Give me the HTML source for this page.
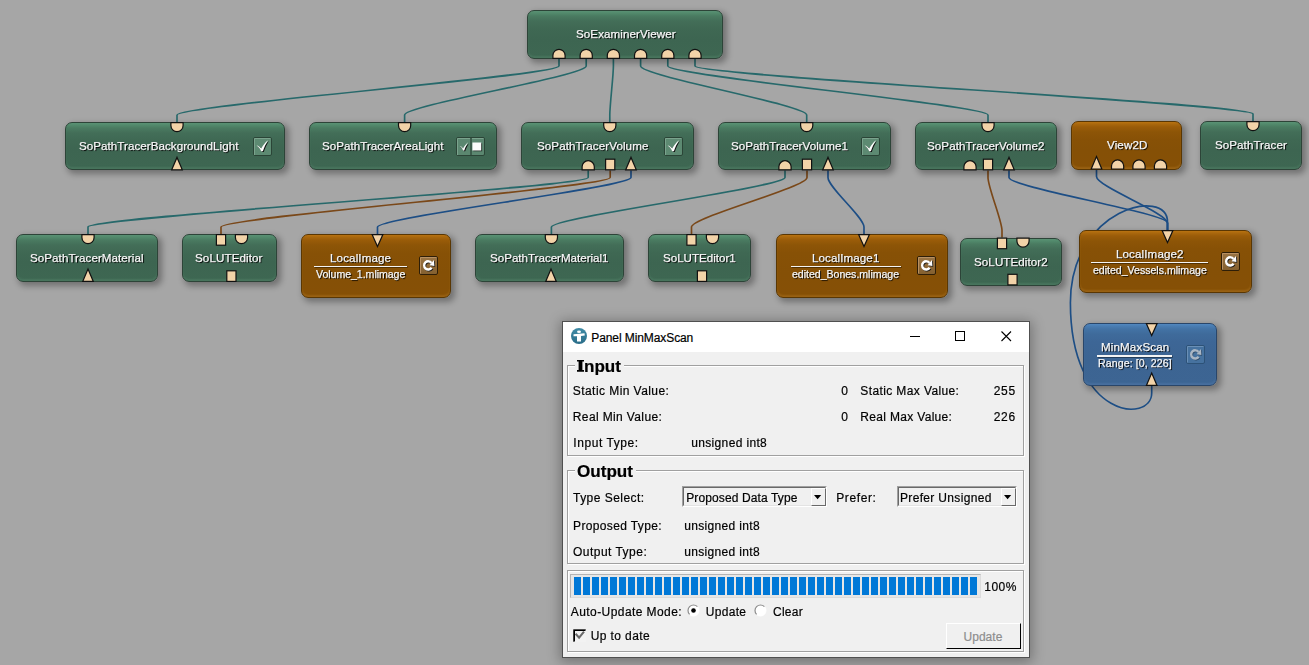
<!DOCTYPE html>
<html><head><meta charset="utf-8"><style>
*{margin:0;padding:0;box-sizing:border-box}
html,body{width:1309px;height:665px;overflow:hidden;background:#a6a6a6;font-family:"Liberation Sans",sans-serif}
.layer{position:absolute;left:0;top:0;width:1309px;height:665px}
.m{position:absolute;border-radius:7px;box-shadow:2px 3px 4px rgba(0,0,0,0.35)}
.tx{position:absolute;white-space:nowrap;line-height:20px;height:20px;-webkit-text-stroke:0.2px currentColor}
.mt{-webkit-text-stroke:0.25px currentColor}
.mt{text-shadow:1px 1px 0.8px #000;will-change:transform}
.dlg{position:absolute;left:562px;top:321px;width:468px;height:337px;background:#f0f0f0;border:1px solid #505050;box-shadow:0 2px 12px 2px rgba(0,0,0,0.3)}
.grp{position:absolute;border:1px solid #a0a0a0;box-shadow:inset 1px 1px 0 #fff,1px 1px 0 #fff}
</style></head><body>
<svg class="layer" width="1309" height="665"><path d="M559,59 L559,66 C559,76 177,105 177,115 L177,122" fill="none" stroke="#27696b" stroke-width="1.65"/><path d="M586.2,59 L586.2,66 C586.2,76 404.6,105 404.6,115 L404.6,122" fill="none" stroke="#27696b" stroke-width="1.65"/><path d="M613.4,59 L613.4,66 C613.4,76 609.8,105 609.8,115 L609.8,122" fill="none" stroke="#27696b" stroke-width="1.65"/><path d="M640.6,59 L640.6,66 C640.6,76 806.7,105 806.7,115 L806.7,122" fill="none" stroke="#27696b" stroke-width="1.65"/><path d="M667.8,59 L667.8,66 C667.8,76 988,105 988,115 L988,122" fill="none" stroke="#27696b" stroke-width="1.65"/><path d="M695,59 L695,66 C695,76 1253,104 1253,114 L1253,121" fill="none" stroke="#27696b" stroke-width="1.65"/><path d="M588.2,170.4 L588.2,177.4 C588.2,187.4 88,217 88,227 L88,234" fill="none" stroke="#27696b" stroke-width="1.65"/><path d="M610.2,170.4 L610.2,177.4 C610.2,187.4 221,217 221,227 L221,234" fill="none" stroke="#7a4819" stroke-width="1.65"/><path d="M631,170.4 L631,177.4 C631,187.4 377.5,217 377.5,227 L377.5,234" fill="none" stroke="#1d4e85" stroke-width="1.65"/><path d="M785,170.4 L785,177.4 C785,187.4 551.4,217 551.4,227 L551.4,234" fill="none" stroke="#27696b" stroke-width="1.65"/><path d="M807,170.4 L807,177.4 C807,187.4 691.5,217 691.5,227 L691.5,234" fill="none" stroke="#7a4819" stroke-width="1.65"/><path d="M828,170.4 L828,177.4 C828,187.4 864,217 864,227 L864,234" fill="none" stroke="#1d4e85" stroke-width="1.65"/><path d="M988,170.4 L988,177.4 C988,187.4 1002,220.5 1002,230.5 L1002,237.5" fill="none" stroke="#7a4819" stroke-width="1.65"/><path d="M1009,170.4 L1009,177.4 C1009,187.4 1167.5,213 1167.5,223 L1167.5,230" fill="none" stroke="#1d4e85" stroke-width="1.65"/><path d="M1096.5,169.5 L1096.5,176.5 C1096.5,186.5 1167.5,213 1167.5,223 L1167.5,230" fill="none" stroke="#1d4e85" stroke-width="1.65"/><path d="M1167.5,230 L1167.5,222 C1167.5,186.8 1070.4,207.8 1070.4,302.8 C1070.4,420.4 1151.7,423.2 1151.7,393 L1151.7,386" fill="none" stroke="#1d4e85" stroke-width="1.65"/></svg><div class="m" style="left:527px;top:10px;width:195.5px;height:49px;background:linear-gradient(to bottom,#5a9174 0px,#528a6c 2px,#4a7b61 5px,#436e58 10px,#3f6853 18px,#3d6551 60%,#3e6752 100%);border:1px solid #2d4438;box-shadow:3px 3px 6px 0.5px rgba(0,0,0,0.32),inset 0 -2px 2px rgba(150,220,180,0.12)"></div><div class="tx mt" style="left:575.60px;top:24.18px;font-size:11.6px;font-weight:400;font-family:'Liberation Sans';letter-spacing:0.080px;color:#f6f6f6;">SoExaminerViewer</div><div class="m" style="left:65px;top:122px;width:220px;height:48.400000000000006px;background:linear-gradient(to bottom,#5a9174 0px,#528a6c 2px,#4a7b61 5px,#436e58 10px,#3f6853 18px,#3d6551 60%,#3e6752 100%);border:1px solid #2d4438;box-shadow:3px 3px 6px 0.5px rgba(0,0,0,0.32),inset 0 -2px 2px rgba(150,220,180,0.12)"></div><div class="tx mt" style="left:79.40px;top:136.18px;font-size:11.6px;font-weight:400;font-family:'Liberation Sans';letter-spacing:0.050px;color:#f6f6f6;">SoPathTracerBackgroundLight</div><svg width="20" height="20" style="position:absolute;left:253.0px;top:136.5px"><rect x="0.5" y="0.5" width="18" height="18" rx="1.5" fill="#5d8a72" stroke="#2b4537" stroke-width="1"/><path d="M1.5,18 L1.5,1.5 L17.5,1.5" fill="none" stroke="#7ba38d" stroke-width="1"/><path d="M3.6,8.4 C5.4,8.6 7,9.8 8.3,11.6 C9.9,8.4 12,5.6 15,3.2 C13.2,6.2 11.2,10 9.9,14.2 L8.2,14.2 C7.2,11.8 5.8,9.8 3.6,8.4 Z" fill="#111" transform="translate(0.9,0.9)"/><path d="M3.6,8.4 C5.4,8.6 7,9.8 8.3,11.6 C9.9,8.4 12,5.6 15,3.2 C13.2,6.2 11.2,10 9.9,14.2 L8.2,14.2 C7.2,11.8 5.8,9.8 3.6,8.4 Z" fill="#fff"/></svg><div class="m" style="left:309px;top:122px;width:188px;height:48.400000000000006px;background:linear-gradient(to bottom,#5a9174 0px,#528a6c 2px,#4a7b61 5px,#436e58 10px,#3f6853 18px,#3d6551 60%,#3e6752 100%);border:1px solid #2d4438;box-shadow:3px 3px 6px 0.5px rgba(0,0,0,0.32),inset 0 -2px 2px rgba(150,220,180,0.12)"></div><div class="tx mt" style="left:321.72px;top:136.18px;font-size:11.6px;font-weight:400;font-family:'Liberation Sans';letter-spacing:0.035px;color:#f6f6f6;">SoPathTracerAreaLight</div><svg width="30" height="20" style="position:absolute;left:455.5px;top:136.5px"><rect x="0.5" y="0.5" width="28" height="18" rx="1.5" fill="#5b8770" stroke="#2b4537"/><path d="M1.5,18 L1.5,1.5 L14,1.5 M16,1.5 L27.5,1.5" fill="none" stroke="#7ba38d"/><line x1="15" y1="1" x2="15" y2="18" stroke="#1f3329" stroke-width="1"/><g transform="translate(1.0,2.9) scale(0.74)"><path d="M3.6,8.4 C5.4,8.6 7,9.8 8.3,11.6 C9.9,8.4 12,5.6 15,3.2 C13.2,6.2 11.2,10 9.9,14.2 L8.2,14.2 C7.2,11.8 5.8,9.8 3.6,8.4 Z" fill="#111" transform="translate(1.2,1.2)"/><path d="M3.6,8.4 C5.4,8.6 7,9.8 8.3,11.6 C9.9,8.4 12,5.6 15,3.2 C13.2,6.2 11.2,10 9.9,14.2 L8.2,14.2 C7.2,11.8 5.8,9.8 3.6,8.4 Z" fill="#fff"/></g><rect x="17.3" y="6.3" width="8.8" height="8" fill="#1a1a1a" opacity="0.8"/><rect x="16.4" y="5.5" width="8.8" height="8" fill="#fdfdfd"/></svg><div class="m" style="left:521px;top:122px;width:173px;height:48.400000000000006px;background:linear-gradient(to bottom,#5a9174 0px,#528a6c 2px,#4a7b61 5px,#436e58 10px,#3f6853 18px,#3d6551 60%,#3e6752 100%);border:1px solid #2d4438;box-shadow:3px 3px 6px 0.5px rgba(0,0,0,0.32),inset 0 -2px 2px rgba(150,220,180,0.12)"></div><div class="tx mt" style="left:536.72px;top:136.18px;font-size:11.6px;font-weight:400;font-family:'Liberation Sans';letter-spacing:0.094px;color:#f6f6f6;">SoPathTracerVolume</div><svg width="20" height="20" style="position:absolute;left:663.5px;top:136.5px"><rect x="0.5" y="0.5" width="18" height="18" rx="1.5" fill="#5d8a72" stroke="#2b4537" stroke-width="1"/><path d="M1.5,18 L1.5,1.5 L17.5,1.5" fill="none" stroke="#7ba38d" stroke-width="1"/><path d="M3.6,8.4 C5.4,8.6 7,9.8 8.3,11.6 C9.9,8.4 12,5.6 15,3.2 C13.2,6.2 11.2,10 9.9,14.2 L8.2,14.2 C7.2,11.8 5.8,9.8 3.6,8.4 Z" fill="#111" transform="translate(0.9,0.9)"/><path d="M3.6,8.4 C5.4,8.6 7,9.8 8.3,11.6 C9.9,8.4 12,5.6 15,3.2 C13.2,6.2 11.2,10 9.9,14.2 L8.2,14.2 C7.2,11.8 5.8,9.8 3.6,8.4 Z" fill="#fff"/></svg><div class="m" style="left:718px;top:122px;width:173px;height:48.400000000000006px;background:linear-gradient(to bottom,#5a9174 0px,#528a6c 2px,#4a7b61 5px,#436e58 10px,#3f6853 18px,#3d6551 60%,#3e6752 100%);border:1px solid #2d4438;box-shadow:3px 3px 6px 0.5px rgba(0,0,0,0.32),inset 0 -2px 2px rgba(150,220,180,0.12)"></div><div class="tx mt" style="left:730.60px;top:136.18px;font-size:11.6px;font-weight:400;font-family:'Liberation Sans';letter-spacing:0.035px;color:#f6f6f6;">SoPathTracerVolume1</div><svg width="20" height="20" style="position:absolute;left:860.5px;top:136.5px"><rect x="0.5" y="0.5" width="18" height="18" rx="1.5" fill="#5d8a72" stroke="#2b4537" stroke-width="1"/><path d="M1.5,18 L1.5,1.5 L17.5,1.5" fill="none" stroke="#7ba38d" stroke-width="1"/><path d="M3.6,8.4 C5.4,8.6 7,9.8 8.3,11.6 C9.9,8.4 12,5.6 15,3.2 C13.2,6.2 11.2,10 9.9,14.2 L8.2,14.2 C7.2,11.8 5.8,9.8 3.6,8.4 Z" fill="#111" transform="translate(0.9,0.9)"/><path d="M3.6,8.4 C5.4,8.6 7,9.8 8.3,11.6 C9.9,8.4 12,5.6 15,3.2 C13.2,6.2 11.2,10 9.9,14.2 L8.2,14.2 C7.2,11.8 5.8,9.8 3.6,8.4 Z" fill="#fff"/></svg><div class="m" style="left:915px;top:122px;width:142px;height:48.400000000000006px;background:linear-gradient(to bottom,#5a9174 0px,#528a6c 2px,#4a7b61 5px,#436e58 10px,#3f6853 18px,#3d6551 60%,#3e6752 100%);border:1px solid #2d4438;box-shadow:3px 3px 6px 0.5px rgba(0,0,0,0.32),inset 0 -2px 2px rgba(150,220,180,0.12)"></div><div class="tx mt" style="left:927.40px;top:136.18px;font-size:11.6px;font-weight:400;font-family:'Liberation Sans';letter-spacing:0.075px;color:#f6f6f6;">SoPathTracerVolume2</div><div class="m" style="left:1071.3px;top:121px;width:110.70000000000005px;height:48.599999999999994px;background:linear-gradient(to bottom,#b97311 0px,#aa680d 2px,#9a5c09 5px,#8d5507 10px,#875106 18px,#855006 60%,#865006 100%);border:1px solid #5a3703;box-shadow:3px 3px 6px 0.5px rgba(0,0,0,0.32),inset 0 -2px 2px rgba(255,190,90,0.16)"></div><div class="tx mt" style="left:1107.00px;top:135.18px;font-size:11.6px;font-weight:400;font-family:'Liberation Sans';letter-spacing:0.118px;color:#f6f6f6;">View2D</div><div class="m" style="left:1200px;top:121px;width:102px;height:48.5px;background:linear-gradient(to bottom,#5a9174 0px,#528a6c 2px,#4a7b61 5px,#436e58 10px,#3f6853 18px,#3d6551 60%,#3e6752 100%);border:1px solid #2d4438;box-shadow:3px 3px 6px 0.5px rgba(0,0,0,0.32),inset 0 -2px 2px rgba(150,220,180,0.12)"></div><div class="tx mt" style="left:1214.76px;top:135.18px;font-size:11.6px;font-weight:400;font-family:'Liberation Sans';letter-spacing:0.062px;color:#f6f6f6;">SoPathTracer</div><div class="m" style="left:16px;top:234px;width:142px;height:48px;background:linear-gradient(to bottom,#5a9174 0px,#528a6c 2px,#4a7b61 5px,#436e58 10px,#3f6853 18px,#3d6551 60%,#3e6752 100%);border:1px solid #2d4438;box-shadow:3px 3px 6px 0.5px rgba(0,0,0,0.32),inset 0 -2px 2px rgba(150,220,180,0.12)"></div><div class="tx mt" style="left:29.72px;top:248.18px;font-size:11.6px;font-weight:400;font-family:'Liberation Sans';letter-spacing:0.061px;color:#f6f6f6;">SoPathTracerMaterial</div><div class="m" style="left:182px;top:234px;width:95px;height:48px;background:linear-gradient(to bottom,#5a9174 0px,#528a6c 2px,#4a7b61 5px,#436e58 10px,#3f6853 18px,#3d6551 60%,#3e6752 100%);border:1px solid #2d4438;box-shadow:3px 3px 6px 0.5px rgba(0,0,0,0.32),inset 0 -2px 2px rgba(150,220,180,0.12)"></div><div class="tx mt" style="left:195.40px;top:248.18px;font-size:11.6px;font-weight:400;font-family:'Liberation Sans';letter-spacing:0.109px;color:#f6f6f6;">SoLUTEditor</div><div class="m" style="left:301px;top:234px;width:150px;height:63.5px;background:linear-gradient(to bottom,#b97311 0px,#aa680d 2px,#9a5c09 5px,#8d5507 10px,#875106 18px,#855006 60%,#865006 100%);border:1px solid #5a3703;box-shadow:3px 3px 6px 0.5px rgba(0,0,0,0.32),inset 0 -2px 2px rgba(255,190,90,0.16)"></div><div class="tx mt" style="left:330.04px;top:247.98px;font-size:11.6px;font-weight:400;font-family:'Liberation Sans';letter-spacing:0.123px;color:#f6f6f6;">LocalImage</div><div style="position:absolute;left:314px;top:266px;width:93px;height:1.4px;background:#f4f4f4;box-shadow:0.7px 0.7px 0.6px rgba(0,0,0,0.5)"></div><div class="tx mt" style="left:316.16px;top:264.13px;font-size:10.6px;font-weight:400;font-family:'Liberation Sans';letter-spacing:-0.051px;color:#f6f6f6;">Volume_1.mlimage</div><svg width="20" height="20" style="position:absolute;left:419.1px;top:256.1px"><defs><linearGradient id="rg419" x1="0" y1="0" x2="0" y2="1"><stop offset="0" stop-color="#9a7444"/><stop offset="1" stop-color="#84602f"/></linearGradient></defs><rect x="0.5" y="0.5" width="18" height="18" rx="1.5" fill="url(#rg419)" stroke="#2e1e07"/><path d="M1.5,17.5 L1.5,1.5 L17.5,1.5" fill="none" stroke="#b89062" stroke-width="1"/><g transform="translate(0.8,0.8)"><path d="M12.6,11.8 A4.1,4.1 0 1 1 12.5,6.9" fill="none" stroke="#1a1a1a" stroke-width="2.4"/><path d="M14.9,4.0 L15.4,10.0 L10.6,9.2 Z" fill="#1a1a1a"/></g><path d="M12.6,11.8 A4.1,4.1 0 1 1 12.5,6.9" fill="none" stroke="#fff" stroke-width="2.4"/><path d="M14.9,4.0 L15.4,10.0 L10.6,9.2 Z" fill="#fff"/></svg><div class="m" style="left:475px;top:234px;width:149px;height:48px;background:linear-gradient(to bottom,#5a9174 0px,#528a6c 2px,#4a7b61 5px,#436e58 10px,#3f6853 18px,#3d6551 60%,#3e6752 100%);border:1px solid #2d4438;box-shadow:3px 3px 6px 0.5px rgba(0,0,0,0.32),inset 0 -2px 2px rgba(150,220,180,0.12)"></div><div class="tx mt" style="left:490.04px;top:248.18px;font-size:11.6px;font-weight:400;font-family:'Liberation Sans';letter-spacing:-0.011px;color:#f6f6f6;">SoPathTracerMaterial1</div><div class="m" style="left:648px;top:234px;width:103px;height:48px;background:linear-gradient(to bottom,#5a9174 0px,#528a6c 2px,#4a7b61 5px,#436e58 10px,#3f6853 18px,#3d6551 60%,#3e6752 100%);border:1px solid #2d4438;box-shadow:3px 3px 6px 0.5px rgba(0,0,0,0.32),inset 0 -2px 2px rgba(150,220,180,0.12)"></div><div class="tx mt" style="left:662.72px;top:248.18px;font-size:11.6px;font-weight:400;font-family:'Liberation Sans';letter-spacing:-0.008px;color:#f6f6f6;">SoLUTEditor1</div><div class="m" style="left:776px;top:234px;width:172px;height:63.5px;background:linear-gradient(to bottom,#b97311 0px,#aa680d 2px,#9a5c09 5px,#8d5507 10px,#875106 18px,#855006 60%,#865006 100%);border:1px solid #5a3703;box-shadow:3px 3px 6px 0.5px rgba(0,0,0,0.32),inset 0 -2px 2px rgba(255,190,90,0.16)"></div><div class="tx mt" style="left:812.40px;top:247.98px;font-size:11.6px;font-weight:400;font-family:'Liberation Sans';letter-spacing:0.098px;color:#f6f6f6;">LocalImage1</div><div style="position:absolute;left:791px;top:266px;width:110px;height:1.4px;background:#f4f4f4;box-shadow:0.7px 0.7px 0.6px rgba(0,0,0,0.5)"></div><div class="tx mt" style="left:792.40px;top:264.13px;font-size:10.6px;font-weight:400;font-family:'Liberation Sans';letter-spacing:-0.034px;color:#f6f6f6;">edited_Bones.mlimage</div><svg width="20" height="20" style="position:absolute;left:917.0px;top:255.8px"><defs><linearGradient id="rg917" x1="0" y1="0" x2="0" y2="1"><stop offset="0" stop-color="#9a7444"/><stop offset="1" stop-color="#84602f"/></linearGradient></defs><rect x="0.5" y="0.5" width="18" height="18" rx="1.5" fill="url(#rg917)" stroke="#2e1e07"/><path d="M1.5,17.5 L1.5,1.5 L17.5,1.5" fill="none" stroke="#b89062" stroke-width="1"/><g transform="translate(0.8,0.8)"><path d="M12.6,11.8 A4.1,4.1 0 1 1 12.5,6.9" fill="none" stroke="#1a1a1a" stroke-width="2.4"/><path d="M14.9,4.0 L15.4,10.0 L10.6,9.2 Z" fill="#1a1a1a"/></g><path d="M12.6,11.8 A4.1,4.1 0 1 1 12.5,6.9" fill="none" stroke="#fff" stroke-width="2.4"/><path d="M14.9,4.0 L15.4,10.0 L10.6,9.2 Z" fill="#fff"/></svg><div class="m" style="left:959.5px;top:237.5px;width:102.5px;height:48.0px;background:linear-gradient(to bottom,#5a9174 0px,#528a6c 2px,#4a7b61 5px,#436e58 10px,#3f6853 18px,#3d6551 60%,#3e6752 100%);border:1px solid #2d4438;box-shadow:3px 3px 6px 0.5px rgba(0,0,0,0.32),inset 0 -2px 2px rgba(150,220,180,0.12)"></div><div class="tx mt" style="left:973.72px;top:251.68px;font-size:11.6px;font-weight:400;font-family:'Liberation Sans';letter-spacing:0.083px;color:#f6f6f6;">SoLUTEditor2</div><div class="m" style="left:1079px;top:230px;width:173px;height:63px;background:linear-gradient(to bottom,#b97311 0px,#aa680d 2px,#9a5c09 5px,#8d5507 10px,#875106 18px,#855006 60%,#865006 100%);border:1px solid #5a3703;box-shadow:3px 3px 6px 0.5px rgba(0,0,0,0.32),inset 0 -2px 2px rgba(255,190,90,0.16)"></div><div class="tx mt" style="left:1116.40px;top:243.98px;font-size:11.6px;font-weight:400;font-family:'Liberation Sans';letter-spacing:0.114px;color:#f6f6f6;">LocalImage2</div><div style="position:absolute;left:1091px;top:262px;width:117px;height:1.4px;background:#f4f4f4;box-shadow:0.7px 0.7px 0.6px rgba(0,0,0,0.5)"></div><div class="tx mt" style="left:1093.40px;top:260.13px;font-size:10.6px;font-weight:400;font-family:'Liberation Sans';letter-spacing:-0.022px;color:#f6f6f6;">edited_Vessels.mlimage</div><svg width="20" height="20" style="position:absolute;left:1221.0px;top:251.7px"><defs><linearGradient id="rg1221" x1="0" y1="0" x2="0" y2="1"><stop offset="0" stop-color="#9a7444"/><stop offset="1" stop-color="#84602f"/></linearGradient></defs><rect x="0.5" y="0.5" width="18" height="18" rx="1.5" fill="url(#rg1221)" stroke="#2e1e07"/><path d="M1.5,17.5 L1.5,1.5 L17.5,1.5" fill="none" stroke="#b89062" stroke-width="1"/><g transform="translate(0.8,0.8)"><path d="M12.6,11.8 A4.1,4.1 0 1 1 12.5,6.9" fill="none" stroke="#1a1a1a" stroke-width="2.4"/><path d="M14.9,4.0 L15.4,10.0 L10.6,9.2 Z" fill="#1a1a1a"/></g><path d="M12.6,11.8 A4.1,4.1 0 1 1 12.5,6.9" fill="none" stroke="#fff" stroke-width="2.4"/><path d="M14.9,4.0 L15.4,10.0 L10.6,9.2 Z" fill="#fff"/></svg><div class="m" style="left:1083px;top:323px;width:134px;height:63px;background:linear-gradient(to bottom,#5288c0 0px,#4a7db3 2px,#4373a5 5px,#3f6b9b 10px,#3d6696 18px,#3c6492 60%,#3d6593 100%);border:1px solid #29466a;box-shadow:3px 3px 6px 0.5px rgba(0,0,0,0.32),inset 0 -2px 2px rgba(150,190,240,0.12)"></div><div class="tx mt" style="left:1100.72px;top:336.98px;font-size:11.6px;font-weight:400;font-family:'Liberation Sans';letter-spacing:0.133px;color:#f6f6f6;">MinMaxScan</div><div style="position:absolute;left:1097px;top:355.4px;width:75px;height:1.4px;background:#f4f4f4;box-shadow:0.7px 0.7px 0.6px rgba(0,0,0,0.5)"></div><div class="tx mt" style="left:1098.40px;top:353.13px;font-size:10.6px;font-weight:400;font-family:'Liberation Sans';letter-spacing:0.084px;color:#f6f6f6;">Range: [0, 226]</div><svg width="20" height="20" style="position:absolute;left:1185.8px;top:345.2px"><rect x="0.5" y="0.5" width="18" height="18" rx="1.5" fill="#46729f" stroke="#2d5277"/><path d="M1.5,17.5 L1.5,1.5 L17.5,1.5" fill="none" stroke="#6a8fb6" stroke-width="1"/><g transform="translate(0.7,0.7)"><path d="M12.6,11.8 A4.1,4.1 0 1 1 12.5,6.9" fill="none" stroke="#2f4a68" stroke-width="2.4"/><path d="M14.9,4.0 L15.4,10.0 L10.6,9.2 Z" fill="#2f4a68"/></g><path d="M12.6,11.8 A4.1,4.1 0 1 1 12.5,6.9" fill="none" stroke="#aab6c4" stroke-width="2.4"/><path d="M14.9,4.0 L15.4,10.0 L10.6,9.2 Z" fill="#aab6c4"/></svg><svg class="layer" width="1309" height="665"><path d="M552.9,58.4 L552.9,55.4 A6.1,6.1 0 0 1 565.1,55.4 L565.1,58.4 Z" fill="#f2d3a8" stroke="#111" stroke-width="1.2"/><path d="M580.1,58.4 L580.1,55.4 A6.1,6.1 0 0 1 592.3000000000001,55.4 L592.3000000000001,58.4 Z" fill="#f2d3a8" stroke="#111" stroke-width="1.2"/><path d="M607.3,58.4 L607.3,55.4 A6.1,6.1 0 0 1 619.5,55.4 L619.5,58.4 Z" fill="#f2d3a8" stroke="#111" stroke-width="1.2"/><path d="M634.5,58.4 L634.5,55.4 A6.1,6.1 0 0 1 646.7,55.4 L646.7,58.4 Z" fill="#f2d3a8" stroke="#111" stroke-width="1.2"/><path d="M661.6999999999999,58.4 L661.6999999999999,55.4 A6.1,6.1 0 0 1 673.9,55.4 L673.9,58.4 Z" fill="#f2d3a8" stroke="#111" stroke-width="1.2"/><path d="M688.9,58.4 L688.9,55.4 A6.1,6.1 0 0 1 701.1,55.4 L701.1,58.4 Z" fill="#f2d3a8" stroke="#111" stroke-width="1.2"/><path d="M170.9,122.6 L170.9,125.6 A6.1,6.1 0 0 0 183.1,125.6 L183.1,122.6 Z" fill="#f2d3a8" stroke="#111" stroke-width="1.2"/><path d="M171.7,169.8 L177,157.4 L182.3,169.8 Z" fill="#f2d3a8" stroke="#111" stroke-width="1.2"/><path d="M398.5,122.6 L398.5,125.6 A6.1,6.1 0 0 0 410.70000000000005,125.6 L410.70000000000005,122.6 Z" fill="#f2d3a8" stroke="#111" stroke-width="1.2"/><path d="M603.6999999999999,122.6 L603.6999999999999,125.6 A6.1,6.1 0 0 0 615.9,125.6 L615.9,122.6 Z" fill="#f2d3a8" stroke="#111" stroke-width="1.2"/><path d="M582.1,169.8 L582.1,166.8 A6.1,6.1 0 0 1 594.3000000000001,166.8 L594.3000000000001,169.8 Z" fill="#f2d3a8" stroke="#111" stroke-width="1.2"/><rect x="605.6" y="159.20000000000002" width="9.2" height="10.6" fill="#f2d3a8" stroke="#111" stroke-width="1.2"/><path d="M625.7,169.8 L631,157.4 L636.3,169.8 Z" fill="#f2d3a8" stroke="#111" stroke-width="1.2"/><path d="M800.6,122.6 L800.6,125.6 A6.1,6.1 0 0 0 812.8000000000001,125.6 L812.8000000000001,122.6 Z" fill="#f2d3a8" stroke="#111" stroke-width="1.2"/><path d="M778.9,169.8 L778.9,166.8 A6.1,6.1 0 0 1 791.1,166.8 L791.1,169.8 Z" fill="#f2d3a8" stroke="#111" stroke-width="1.2"/><rect x="802.4" y="159.20000000000002" width="9.2" height="10.6" fill="#f2d3a8" stroke="#111" stroke-width="1.2"/><path d="M822.7,169.8 L828,157.4 L833.3,169.8 Z" fill="#f2d3a8" stroke="#111" stroke-width="1.2"/><path d="M981.9,122.6 L981.9,125.6 A6.1,6.1 0 0 0 994.1,125.6 L994.1,122.6 Z" fill="#f2d3a8" stroke="#111" stroke-width="1.2"/><path d="M963.9,169.8 L963.9,166.8 A6.1,6.1 0 0 1 976.1,166.8 L976.1,169.8 Z" fill="#f2d3a8" stroke="#111" stroke-width="1.2"/><rect x="983.4" y="159.20000000000002" width="9.2" height="10.6" fill="#f2d3a8" stroke="#111" stroke-width="1.2"/><path d="M1003.7,169.8 L1009,157.4 L1014.3,169.8 Z" fill="#f2d3a8" stroke="#111" stroke-width="1.2"/><path d="M1091.2,169.0 L1096.5,156.6 L1101.8,169.0 Z" fill="#f2d3a8" stroke="#111" stroke-width="1.2"/><path d="M1111.5,169.0 L1111.5,166.0 A6.1,6.1 0 0 1 1123.6999999999998,166.0 L1123.6999999999998,169.0 Z" fill="#f2d3a8" stroke="#111" stroke-width="1.2"/><path d="M1132.9,169.0 L1132.9,166.0 A6.1,6.1 0 0 1 1145.1,166.0 L1145.1,169.0 Z" fill="#f2d3a8" stroke="#111" stroke-width="1.2"/><path d="M1154.4,169.0 L1154.4,166.0 A6.1,6.1 0 0 1 1166.6,166.0 L1166.6,169.0 Z" fill="#f2d3a8" stroke="#111" stroke-width="1.2"/><path d="M1246.9,121.6 L1246.9,124.6 A6.1,6.1 0 0 0 1259.1,124.6 L1259.1,121.6 Z" fill="#f2d3a8" stroke="#111" stroke-width="1.2"/><path d="M81.9,234.6 L81.9,237.6 A6.1,6.1 0 0 0 94.1,237.6 L94.1,234.6 Z" fill="#f2d3a8" stroke="#111" stroke-width="1.2"/><path d="M82.7,281.4 L88,269.0 L93.3,281.4 Z" fill="#f2d3a8" stroke="#111" stroke-width="1.2"/><rect x="216.4" y="234.6" width="9.2" height="10.6" fill="#f2d3a8" stroke="#111" stroke-width="1.2"/><path d="M235.4,234.6 L235.4,237.6 A6.1,6.1 0 0 0 247.6,237.6 L247.6,234.6 Z" fill="#f2d3a8" stroke="#111" stroke-width="1.2"/><rect x="226.8" y="270.8" width="9.2" height="10.6" fill="#f2d3a8" stroke="#111" stroke-width="1.2"/><path d="M372.1,234.6 L377.5,246.6 L382.9,234.6 Z" fill="#f2d3a8" stroke="#111" stroke-width="1.2"/><path d="M545.3,234.6 L545.3,237.6 A6.1,6.1 0 0 0 557.5,237.6 L557.5,234.6 Z" fill="#f2d3a8" stroke="#111" stroke-width="1.2"/><path d="M545.7,281.4 L551,269.0 L556.3,281.4 Z" fill="#f2d3a8" stroke="#111" stroke-width="1.2"/><rect x="686.9" y="234.6" width="9.2" height="10.6" fill="#f2d3a8" stroke="#111" stroke-width="1.2"/><path d="M706.4,234.6 L706.4,237.6 A6.1,6.1 0 0 0 718.6,237.6 L718.6,234.6 Z" fill="#f2d3a8" stroke="#111" stroke-width="1.2"/><rect x="697.4" y="270.8" width="9.2" height="10.6" fill="#f2d3a8" stroke="#111" stroke-width="1.2"/><path d="M858.6,234.6 L864,246.6 L869.4,234.6 Z" fill="#f2d3a8" stroke="#111" stroke-width="1.2"/><rect x="997.4" y="238.1" width="9.2" height="10.6" fill="#f2d3a8" stroke="#111" stroke-width="1.2"/><path d="M1016.9,238.1 L1016.9,241.1 A6.1,6.1 0 0 0 1029.1,241.1 L1029.1,238.1 Z" fill="#f2d3a8" stroke="#111" stroke-width="1.2"/><rect x="1007.9" y="274.3" width="9.2" height="10.6" fill="#f2d3a8" stroke="#111" stroke-width="1.2"/><path d="M1162.1,230.6 L1167.5,242.6 L1172.9,230.6 Z" fill="#f2d3a8" stroke="#111" stroke-width="1.2"/><path d="M1146.3,323.6 L1151.7,335.6 L1157.1000000000001,323.6 Z" fill="#f2d3a8" stroke="#111" stroke-width="1.2"/><path d="M1146.4,385.4 L1151.7,373.0 L1157.0,385.4 Z" fill="#f2d3a8" stroke="#111" stroke-width="1.2"/></svg><div class="dlg"></div><div style="position:absolute;left:563px;top:322px;width:466px;height:30px;background:#fff"></div><svg width="20" height="20" style="position:absolute;left:569px;top:326px"><defs><linearGradient id="ig" x1="0" y1="0" x2="0" y2="1"><stop offset="0" stop-color="#3f8ba6"/><stop offset="1" stop-color="#2a6d89"/></linearGradient></defs><circle cx="10" cy="10" r="8" fill="url(#ig)"/><ellipse cx="10" cy="5.8" rx="2" ry="1.3" fill="#fff"/><path d="M4.5,8.3 L15.5,7.2 L15.8,9.4 L12,10 L12,15.5 L8,15.5 L8,10.2 L4.5,10.2 Z" fill="#fff"/></svg><div class="tx " style="left:591.28px;top:327.74px;font-size:12px;font-weight:400;font-family:'Liberation Sans';letter-spacing:-0.090px;color:#000;">Panel MinMaxScan</div><svg width="466" height="30" style="position:absolute;left:563px;top:322px"><line x1="347" y1="14.5" x2="357" y2="14.5" stroke="#000" stroke-width="1"/><rect x="392.5" y="9.5" width="9" height="9" fill="none" stroke="#000" stroke-width="1"/><path d="M438.5,9.5 L448,19 M448,9.5 L438.5,19" stroke="#000" stroke-width="1.1"/></svg><div class="grp" style="left:567px;top:365px;width:457px;height:91px"></div><div style="position:absolute;left:575px;top:356px;width:49px;height:18px;background:#f0f0f0"></div><svg width="10" height="16" style="position:absolute;left:576px;top:358px"><path d="M1,1.9 L8,1.9 L8,3.6 L6.4,3.6 L6.4,12.1 L8,12.1 L8,13.8 L1,13.8 L1,12.1 L2.6,12.1 L2.6,3.6 L1,3.6 Z" fill="#000"/></svg><div class="tx sx" style="left:584.23px;top:356.76px;font-size:16px;font-weight:700;font-family:'Liberation Sans';transform:scaleX(1.0664);transform-origin:0 0;color:#000;">nput</div><div class="grp" style="left:567px;top:470px;width:457px;height:94px"></div><div style="position:absolute;left:575px;top:461px;width:61px;height:18px;background:#f0f0f0"></div><div class="tx sx" style="left:576.88px;top:461.96px;font-size:16px;font-weight:700;font-family:'Liberation Sans';transform:scaleX(1.0683);transform-origin:0 0;color:#000;">Output</div><div class="grp" style="left:567px;top:570px;width:457px;height:82px"></div><div class="tx " style="left:572.80px;top:381.04px;font-size:12px;font-weight:400;font-family:'Liberation Sans';letter-spacing:0.436px;color:#000;">Static Min Value:</div><div class="tx " style="left:572.80px;top:407.04px;font-size:12px;font-weight:400;font-family:'Liberation Sans';letter-spacing:0.371px;color:#000;">Real Min Value:</div><div class="tx " style="left:573.32px;top:433.04px;font-size:12px;font-weight:400;font-family:'Liberation Sans';letter-spacing:0.560px;color:#000;">Input Type:</div><div class="tx " style="left:691.20px;top:433.04px;font-size:12px;font-weight:400;font-family:'Liberation Sans';letter-spacing:0.350px;color:#000;">unsigned int8</div><div class="tx " style="left:841.20px;top:380.94px;font-size:12px;font-weight:400;font-family:'Liberation Sans';letter-spacing:0.000px;color:#000;">0</div><div class="tx " style="left:841.20px;top:406.84px;font-size:12px;font-weight:400;font-family:'Liberation Sans';letter-spacing:0.000px;color:#000;">0</div><div class="tx " style="left:860.36px;top:380.94px;font-size:12px;font-weight:400;font-family:'Liberation Sans';letter-spacing:0.381px;color:#000;">Static Max Value:</div><div class="tx " style="left:860.36px;top:406.84px;font-size:12px;font-weight:400;font-family:'Liberation Sans';letter-spacing:0.316px;color:#000;">Real Max Value:</div><div class="tx " style="left:993.72px;top:380.94px;font-size:12px;font-weight:400;font-family:'Liberation Sans';letter-spacing:0.686px;color:#000;">255</div><div class="tx " style="left:993.72px;top:406.84px;font-size:12px;font-weight:400;font-family:'Liberation Sans';letter-spacing:0.686px;color:#000;">226</div><div class="tx " style="left:573.04px;top:487.74px;font-size:12px;font-weight:400;font-family:'Liberation Sans';letter-spacing:0.460px;color:#000;">Type Select:</div><div class="tx " style="left:573.04px;top:515.64px;font-size:12px;font-weight:400;font-family:'Liberation Sans';letter-spacing:0.360px;color:#000;">Proposed Type:</div><div class="tx " style="left:573.04px;top:542.44px;font-size:12px;font-weight:400;font-family:'Liberation Sans';letter-spacing:0.472px;color:#000;">Output Type:</div><div class="tx " style="left:684.20px;top:515.64px;font-size:12px;font-weight:400;font-family:'Liberation Sans';letter-spacing:0.337px;color:#000;">unsigned int8</div><div class="tx " style="left:684.20px;top:542.44px;font-size:12px;font-weight:400;font-family:'Liberation Sans';letter-spacing:0.337px;color:#000;">unsigned int8</div><div class="tx " style="left:836.20px;top:487.74px;font-size:12px;font-weight:400;font-family:'Liberation Sans';letter-spacing:0.620px;color:#000;">Prefer:</div><div style="position:absolute;left:682px;top:486px;width:145px;height:21px;border-top:1px solid #a0a0a0;border-left:1px solid #a0a0a0;border-right:1px solid #fff;border-bottom:1px solid #fff;background:#f0f0f0"><div style="position:absolute;left:0;top:0;right:0;bottom:0;border-top:1px solid #696969;border-left:1px solid #696969;border-right:1px solid #e3e3e3;border-bottom:1px solid #e3e3e3"></div><div style="position:absolute;right:0px;top:1px;width:15px;height:18px;border-top:1px solid #fff;border-left:1px solid #fff;border-right:1px solid #696969;border-bottom:1px solid #696969;background:#f0f0f0"><svg width="14" height="16" style="position:absolute;left:-1px;top:-1px"><path d="M3,7 L10.2,7 L6.6,11.2 Z" fill="#000"/></svg></div></div><div class="tx " style="left:686.20px;top:487.94px;font-size:12px;font-weight:400;font-family:'Liberation Sans';letter-spacing:0.122px;color:#000;">Proposed Data Type</div><div style="position:absolute;left:896.5px;top:486px;width:120.70000000000005px;height:21px;border-top:1px solid #a0a0a0;border-left:1px solid #a0a0a0;border-right:1px solid #fff;border-bottom:1px solid #fff;background:#f0f0f0"><div style="position:absolute;left:0;top:0;right:0;bottom:0;border-top:1px solid #696969;border-left:1px solid #696969;border-right:1px solid #e3e3e3;border-bottom:1px solid #e3e3e3"></div><div style="position:absolute;right:0px;top:1px;width:15px;height:18px;border-top:1px solid #fff;border-left:1px solid #fff;border-right:1px solid #696969;border-bottom:1px solid #696969;background:#f0f0f0"><svg width="14" height="16" style="position:absolute;left:-1px;top:-1px"><path d="M3,7 L10.2,7 L6.6,11.2 Z" fill="#000"/></svg></div></div><div class="tx " style="left:900.00px;top:487.94px;font-size:12px;font-weight:400;font-family:'Liberation Sans';letter-spacing:0.333px;color:#000;">Prefer Unsigned</div><div style="position:absolute;left:570px;top:574px;width:411px;height:24px;border:1px solid;border-color:#b4b4b4 #dcdcdc #dcdcdc #b4b4b4;background:#e6e6e6"><div style="position:absolute;left:2.60px;top:2px;width:7px;height:18px;background:#0078d7"></div><div style="position:absolute;left:11.60px;top:2px;width:7px;height:18px;background:#0078d7"></div><div style="position:absolute;left:20.60px;top:2px;width:7px;height:18px;background:#0078d7"></div><div style="position:absolute;left:29.60px;top:2px;width:7px;height:18px;background:#0078d7"></div><div style="position:absolute;left:38.60px;top:2px;width:7px;height:18px;background:#0078d7"></div><div style="position:absolute;left:47.60px;top:2px;width:7px;height:18px;background:#0078d7"></div><div style="position:absolute;left:56.60px;top:2px;width:7px;height:18px;background:#0078d7"></div><div style="position:absolute;left:65.60px;top:2px;width:7px;height:18px;background:#0078d7"></div><div style="position:absolute;left:74.60px;top:2px;width:7px;height:18px;background:#0078d7"></div><div style="position:absolute;left:83.60px;top:2px;width:7px;height:18px;background:#0078d7"></div><div style="position:absolute;left:92.60px;top:2px;width:7px;height:18px;background:#0078d7"></div><div style="position:absolute;left:101.60px;top:2px;width:7px;height:18px;background:#0078d7"></div><div style="position:absolute;left:110.60px;top:2px;width:7px;height:18px;background:#0078d7"></div><div style="position:absolute;left:119.60px;top:2px;width:7px;height:18px;background:#0078d7"></div><div style="position:absolute;left:128.60px;top:2px;width:7px;height:18px;background:#0078d7"></div><div style="position:absolute;left:137.60px;top:2px;width:7px;height:18px;background:#0078d7"></div><div style="position:absolute;left:146.60px;top:2px;width:7px;height:18px;background:#0078d7"></div><div style="position:absolute;left:155.60px;top:2px;width:7px;height:18px;background:#0078d7"></div><div style="position:absolute;left:164.60px;top:2px;width:7px;height:18px;background:#0078d7"></div><div style="position:absolute;left:173.60px;top:2px;width:7px;height:18px;background:#0078d7"></div><div style="position:absolute;left:182.60px;top:2px;width:7px;height:18px;background:#0078d7"></div><div style="position:absolute;left:191.60px;top:2px;width:7px;height:18px;background:#0078d7"></div><div style="position:absolute;left:200.60px;top:2px;width:7px;height:18px;background:#0078d7"></div><div style="position:absolute;left:209.60px;top:2px;width:7px;height:18px;background:#0078d7"></div><div style="position:absolute;left:218.60px;top:2px;width:7px;height:18px;background:#0078d7"></div><div style="position:absolute;left:227.60px;top:2px;width:7px;height:18px;background:#0078d7"></div><div style="position:absolute;left:236.60px;top:2px;width:7px;height:18px;background:#0078d7"></div><div style="position:absolute;left:245.60px;top:2px;width:7px;height:18px;background:#0078d7"></div><div style="position:absolute;left:254.60px;top:2px;width:7px;height:18px;background:#0078d7"></div><div style="position:absolute;left:263.60px;top:2px;width:7px;height:18px;background:#0078d7"></div><div style="position:absolute;left:272.60px;top:2px;width:7px;height:18px;background:#0078d7"></div><div style="position:absolute;left:281.60px;top:2px;width:7px;height:18px;background:#0078d7"></div><div style="position:absolute;left:290.60px;top:2px;width:7px;height:18px;background:#0078d7"></div><div style="position:absolute;left:299.60px;top:2px;width:7px;height:18px;background:#0078d7"></div><div style="position:absolute;left:308.60px;top:2px;width:7px;height:18px;background:#0078d7"></div><div style="position:absolute;left:317.60px;top:2px;width:7px;height:18px;background:#0078d7"></div><div style="position:absolute;left:326.60px;top:2px;width:7px;height:18px;background:#0078d7"></div><div style="position:absolute;left:335.60px;top:2px;width:7px;height:18px;background:#0078d7"></div><div style="position:absolute;left:344.60px;top:2px;width:7px;height:18px;background:#0078d7"></div><div style="position:absolute;left:353.60px;top:2px;width:7px;height:18px;background:#0078d7"></div><div style="position:absolute;left:362.60px;top:2px;width:7px;height:18px;background:#0078d7"></div><div style="position:absolute;left:371.60px;top:2px;width:7px;height:18px;background:#0078d7"></div><div style="position:absolute;left:380.60px;top:2px;width:7px;height:18px;background:#0078d7"></div><div style="position:absolute;left:389.60px;top:2px;width:7px;height:18px;background:#0078d7"></div><div style="position:absolute;left:398.60px;top:2px;width:7px;height:18px;background:#0078d7"></div></div><div class="tx " style="left:984.20px;top:577.34px;font-size:12px;font-weight:400;font-family:'Liberation Sans';letter-spacing:0.526px;color:#000;">100%</div><div class="tx " style="left:570.84px;top:601.94px;font-size:12px;font-weight:400;font-family:'Liberation Sans';letter-spacing:0.419px;color:#000;">Auto-Update Mode:</div><svg width="14" height="14" style="position:absolute;left:687px;top:603.7px"><circle cx="6.5" cy="6.5" r="5.5" fill="#fff" stroke="#fff"/><path d="M10.4,2.6 A5.5,5.5 0 0 0 2.6,10.4" fill="none" stroke="#8a8a8a" stroke-width="1.2"/><circle cx="6.5" cy="6.5" r="2.3" fill="#000"/></svg><div class="tx " style="left:705.72px;top:601.94px;font-size:12px;font-weight:400;font-family:'Liberation Sans';letter-spacing:0.308px;color:#000;">Update</div><svg width="14" height="14" style="position:absolute;left:754px;top:603.7px"><circle cx="6.5" cy="6.5" r="5.5" fill="#fff" stroke="#fff"/><path d="M10.4,2.6 A5.5,5.5 0 0 0 2.6,10.4" fill="none" stroke="#8a8a8a" stroke-width="1.2"/></svg><div class="tx " style="left:773.04px;top:601.94px;font-size:12px;font-weight:400;font-family:'Liberation Sans';letter-spacing:0.230px;color:#000;">Clear</div><svg width="14" height="14" style="position:absolute;left:573px;top:629px"><rect x="0" y="0" width="13" height="13" fill="#f2f2f2"/><path d="M0.5,13 L0.5,0.5 L13,0.5" fill="none" stroke="#a0a0a0"/><path d="M1.2,12.5 L1.2,1.2 L12.5,1.2" fill="none" stroke="#000" stroke-width="1.6"/><path d="M2.6,4.8 L6.1,8.6 L11,2.6" fill="none" stroke="#6a6a6a" stroke-width="2.1"/></svg><div class="tx " style="left:590.72px;top:626.34px;font-size:12px;font-weight:400;font-family:'Liberation Sans';letter-spacing:0.394px;color:#000;">Up to date</div><div style="position:absolute;left:946px;top:623px;width:75px;height:26px;border-top:1px solid #fff;border-left:1px solid #fff;border-right:1px solid #000;border-bottom:1px solid #000;background:#f0f0f0"></div><div class="tx " style="left:963.50px;top:627.04px;font-size:12px;font-weight:400;font-family:'Liberation Sans';letter-spacing:0.036px;color:#8d8d8d;">Update</div></body></html>
